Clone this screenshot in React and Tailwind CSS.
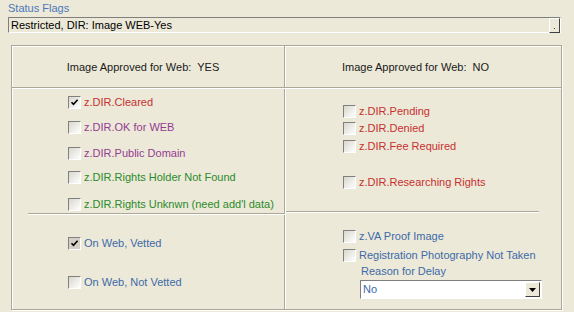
import React from 'react'

const RED = 'text-[#c8302f]'
const PURPLE = 'text-[#943c94]'
const GREEN = 'text-[#2b8a2b]'
const BLUE = 'text-[#3d6aa8]'

function Check({ checked, dim }) {
  return (
    <span
      className={`flex h-[13px] w-[13px] shrink-0 items-center justify-center border-t border-l border-[#808080] border-r-white border-b-white border-r border-b ${
        dim ? 'bg-[#d4d0c8]' : 'bg-linear-to-br from-[#d9d7cc] to-white'
      }`}
    >
      {checked && (
        <svg width="9" height="9" viewBox="0 0 9 9">
          <path d="M1.5 4.2 L3.5 6.4 L7.6 1.8" fill="none" stroke="#000" strokeWidth="1.6" />
        </svg>
      )}
    </span>
  )
}

function Row({ label, color, checked, dim, mt, ml }) {
  return (
    <div className={`flex h-[13px] items-center gap-[3px] ${mt} ${ml}`}>
      <Check checked={checked} dim={dim} />
      <span className={`whitespace-nowrap leading-[13px] ${color}`}>{label}</span>
    </div>
  )
}

function Etch({ className }) {
  return (
    <div className={className}>
      <div className="h-px bg-[#aca899]" />
      <div className="h-px bg-white" />
    </div>
  )
}

export default function App() {
  return (
    <div className="h-[312px] w-[574px] overflow-hidden bg-[#ECE9D8] font-['Liberation_Sans',Arial,sans-serif] text-[11px] text-[#1a1a1a]">
      <div className="pl-[8px] pt-[2px] leading-[13px] text-[#4a78bb]">Status Flags</div>

      {/* status input */}
      <div className="ml-[8px] mt-[2px] flex h-[16px] w-[553px] items-center border-t border-l border-[#7f7f7f] border-r border-b border-r-white border-b-white">
        <span className="flex-1 pl-[2px] leading-[13px] text-black">Restricted, DIR: Image WEB-Yes</span>
        <span className="flex h-[15px] w-[11px] items-end justify-center border-t border-l border-white border-r border-b border-r-[#404040] border-b-[#404040] bg-[#ECE9D8] pb-[3px]">
          <span className="h-px w-px bg-[#404040]" />
        </span>
      </div>

      {/* panel */}
      <div className="ml-[11px] mt-[12px] flex h-[265px] w-[551px] flex-col border border-[#aca899] shadow-[1px_1px_0_#fff,inset_1px_1px_0_#fff]">
        <div className="flex h-[42px] border-b border-[#aca899]">
          <div className="flex w-[273px] items-center justify-center border-r border-[#aca899] pr-[10px] pt-[2px]">
            Image Approved for Web:&nbsp; YES
          </div>
          <div className="flex flex-1 items-center justify-center border-l border-white pr-[16px] pt-[1px]">
            Image Approved for Web:&nbsp; NO
          </div>
        </div>

        <div className="flex flex-1 border-t border-white">
          {/* left column */}
          <div className="flex w-[273px] flex-col border-r border-[#aca899]">
            <Row ml="ml-[56px]" mt="mt-[7px]" label="z.DIR.Cleared" color={RED} checked />
            <Row ml="ml-[56px]" mt="mt-[12px]" label="z.DIR.OK for WEB" color={PURPLE} />
            <Row ml="ml-[56px]" mt="mt-[13px]" label="z.DIR.Public Domain" color={PURPLE} />
            <Row ml="ml-[56px]" mt="mt-[11px]" label="z.DIR.Rights Holder Not Found" color={GREEN} />
            <Row ml="ml-[56px]" mt="mt-[14px]" label="z.DIR.Rights Unknwn (need add'l data)" color={GREEN} />
            <Etch className="ml-[16px] mt-[2px] w-[257px]" />
            <Row ml="ml-[56px]" mt="mt-[22px]" label="On Web, Vetted" color={BLUE} checked dim />
            <Row ml="ml-[56px]" mt="mt-[26px]" label="On Web, Not Vetted" color={BLUE} />
          </div>

          {/* right column */}
          <div className="flex flex-1 flex-col border-l border-white">
            <Row ml="ml-[57px]" mt="mt-[16px]" label="z.DIR.Pending" color={RED} />
            <Row ml="ml-[57px]" mt="mt-[4px]" label="z.DIR.Denied" color={RED} />
            <Row ml="ml-[57px]" mt="mt-[5px]" label="z.DIR.Fee Required" color={RED} />
            <Row ml="ml-[57px]" mt="mt-[23px]" label="z.DIR.Researching Rights" color={RED} />
            <Etch className="mt-[22px] w-[253px]" />
            <Row ml="ml-[57px]" mt="mt-[17px]" label="z.VA Proof Image" color={BLUE} />
            <Row ml="ml-[57px]" mt="mt-[6px]" label="Registration Photography Not Taken" color={BLUE} />
            <div className={`ml-[75px] mt-[3px] leading-[13px] ${BLUE}`}>Reason for Delay</div>
            <div className="ml-[74px] mt-[2px] flex h-[19px] w-[182px] items-center border-t border-l border-[#7f7f7f] border-r border-b border-r-white border-b-white bg-white">
              <span className={`flex-1 pl-[2px] leading-[13px] ${BLUE}`}>No</span>
              <span className="mr-px flex h-[15px] w-[15px] items-center justify-center border-t border-l border-white border-r border-b border-r-[#404040] border-b-[#404040] bg-[#ECE9D8]">
                <svg width="7" height="4" viewBox="0 0 7 4">
                  <path d="M0 0 H7 L3.5 4 Z" fill="#000" />
                </svg>
              </span>
            </div>
          </div>
        </div>
      </div>
    </div>
  )
}
